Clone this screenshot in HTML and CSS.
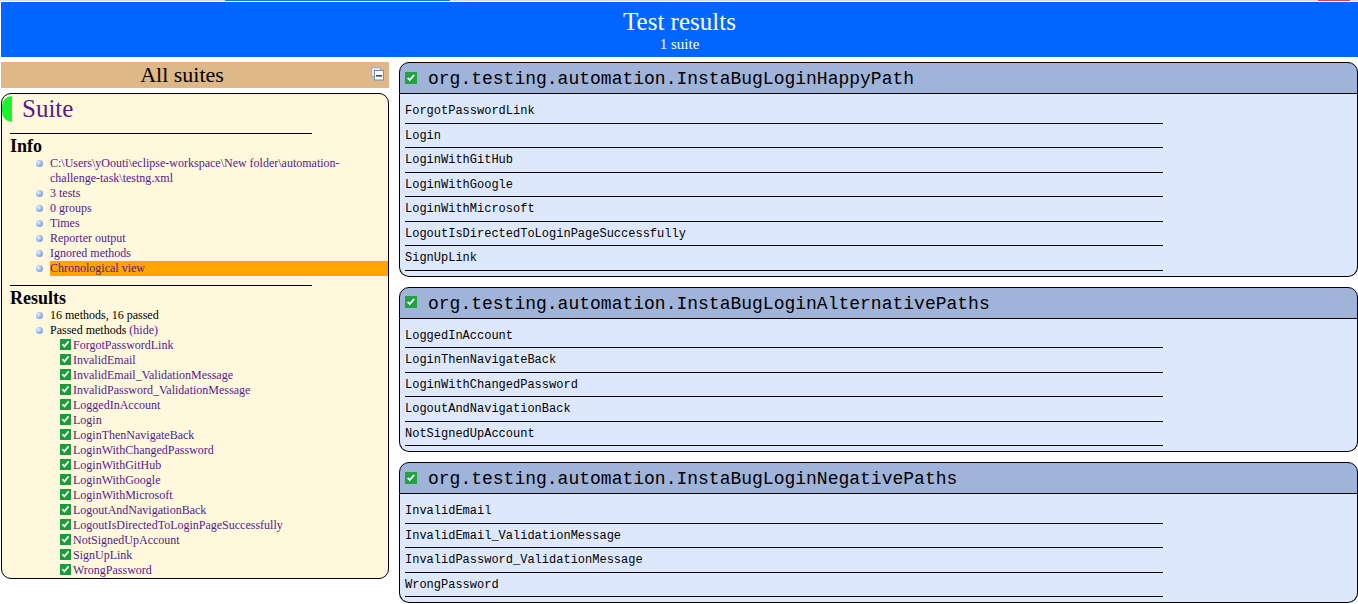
FILE: index.html
```html
<!DOCTYPE html>
<html>
<head>
<meta charset="utf-8">
<title>TestNG reports</title>
<link rel="stylesheet" href="styles.css">
</head>
<body>
<div class="topline">
  <span class="seg seg-grey seg-1"></span>
  <span class="seg seg-blue"></span>
  <span class="seg seg-grey seg-2"></span>
  <span class="seg seg-red"></span>
  <span class="seg seg-grey seg-3"></span>
</div>
<div class="page">
  <div class="banner">
    <span class="banner-title">Test results</span>
    <span class="banner-sub">1 suite</span>
  </div>
  <div class="main">
    <div class="nav">
      <div class="nav-header">
        <svg class="collapse-icon" viewBox="0 0 16 16" width="16" height="16">
          <rect x="3.5" y="0.5" width="9" height="9" fill="#dfe6f1" stroke="#9fb0c8"/>
          <rect x="6.5" y="3.5" width="9" height="9.5" fill="#ffffff" stroke="#6f8fb8"/>
          <rect x="8" y="8" width="6" height="1.6" fill="#1d4a9a"/>
        </svg>
        All suites
      </div>
      <div class="suite">
        <div class="suite-header"><span class="suite-name">Suite</span></div>
        <div class="suite-content">
          <div class="section-title">Info</div>
          <ul class="section-list">
            <li class="lnk">C:\Users\yOouti\eclipse-workspace\New folder\automation-challenge-task\testng.xml</li>
            <li class="lnk">3 tests</li>
            <li class="lnk">0 groups</li>
            <li class="lnk">Times</li>
            <li class="lnk">Reporter output</li>
            <li class="lnk">Ignored methods</li>
            <li class="lnk selected">Chronological view</li>
          </ul>
          <div class="section-title section-results">Results</div>
          <ul class="section-list">
            <li>16 methods, 16 passed</li>
            <li>Passed methods <span class="lnk">(hide)</span>
              <div class="method-list">
                <div class="method lnk"><svg class="chk" viewBox="0 0 11 11"><rect width="11" height="11" fill="#1c9b3b"/><path d="M2.4 5.2 L4.4 7.4 L8.6 2.4" stroke="#fff" stroke-width="1.7" fill="none"/></svg>ForgotPasswordLink</div>
                <div class="method lnk"><svg class="chk" viewBox="0 0 11 11"><rect width="11" height="11" fill="#1c9b3b"/><path d="M2.4 5.2 L4.4 7.4 L8.6 2.4" stroke="#fff" stroke-width="1.7" fill="none"/></svg>InvalidEmail</div>
                <div class="method lnk"><svg class="chk" viewBox="0 0 11 11"><rect width="11" height="11" fill="#1c9b3b"/><path d="M2.4 5.2 L4.4 7.4 L8.6 2.4" stroke="#fff" stroke-width="1.7" fill="none"/></svg>InvalidEmail_ValidationMessage</div>
                <div class="method lnk"><svg class="chk" viewBox="0 0 11 11"><rect width="11" height="11" fill="#1c9b3b"/><path d="M2.4 5.2 L4.4 7.4 L8.6 2.4" stroke="#fff" stroke-width="1.7" fill="none"/></svg>InvalidPassword_ValidationMessage</div>
                <div class="method lnk"><svg class="chk" viewBox="0 0 11 11"><rect width="11" height="11" fill="#1c9b3b"/><path d="M2.4 5.2 L4.4 7.4 L8.6 2.4" stroke="#fff" stroke-width="1.7" fill="none"/></svg>LoggedInAccount</div>
                <div class="method lnk"><svg class="chk" viewBox="0 0 11 11"><rect width="11" height="11" fill="#1c9b3b"/><path d="M2.4 5.2 L4.4 7.4 L8.6 2.4" stroke="#fff" stroke-width="1.7" fill="none"/></svg>Login</div>
                <div class="method lnk"><svg class="chk" viewBox="0 0 11 11"><rect width="11" height="11" fill="#1c9b3b"/><path d="M2.4 5.2 L4.4 7.4 L8.6 2.4" stroke="#fff" stroke-width="1.7" fill="none"/></svg>LoginThenNavigateBack</div>
                <div class="method lnk"><svg class="chk" viewBox="0 0 11 11"><rect width="11" height="11" fill="#1c9b3b"/><path d="M2.4 5.2 L4.4 7.4 L8.6 2.4" stroke="#fff" stroke-width="1.7" fill="none"/></svg>LoginWithChangedPassword</div>
                <div class="method lnk"><svg class="chk" viewBox="0 0 11 11"><rect width="11" height="11" fill="#1c9b3b"/><path d="M2.4 5.2 L4.4 7.4 L8.6 2.4" stroke="#fff" stroke-width="1.7" fill="none"/></svg>LoginWithGitHub</div>
                <div class="method lnk"><svg class="chk" viewBox="0 0 11 11"><rect width="11" height="11" fill="#1c9b3b"/><path d="M2.4 5.2 L4.4 7.4 L8.6 2.4" stroke="#fff" stroke-width="1.7" fill="none"/></svg>LoginWithGoogle</div>
                <div class="method lnk"><svg class="chk" viewBox="0 0 11 11"><rect width="11" height="11" fill="#1c9b3b"/><path d="M2.4 5.2 L4.4 7.4 L8.6 2.4" stroke="#fff" stroke-width="1.7" fill="none"/></svg>LoginWithMicrosoft</div>
                <div class="method lnk"><svg class="chk" viewBox="0 0 11 11"><rect width="11" height="11" fill="#1c9b3b"/><path d="M2.4 5.2 L4.4 7.4 L8.6 2.4" stroke="#fff" stroke-width="1.7" fill="none"/></svg>LogoutAndNavigationBack</div>
                <div class="method lnk"><svg class="chk" viewBox="0 0 11 11"><rect width="11" height="11" fill="#1c9b3b"/><path d="M2.4 5.2 L4.4 7.4 L8.6 2.4" stroke="#fff" stroke-width="1.7" fill="none"/></svg>LogoutIsDirectedToLoginPageSuccessfully</div>
                <div class="method lnk"><svg class="chk" viewBox="0 0 11 11"><rect width="11" height="11" fill="#1c9b3b"/><path d="M2.4 5.2 L4.4 7.4 L8.6 2.4" stroke="#fff" stroke-width="1.7" fill="none"/></svg>NotSignedUpAccount</div>
                <div class="method lnk"><svg class="chk" viewBox="0 0 11 11"><rect width="11" height="11" fill="#1c9b3b"/><path d="M2.4 5.2 L4.4 7.4 L8.6 2.4" stroke="#fff" stroke-width="1.7" fill="none"/></svg>SignUpLink</div>
                <div class="method lnk"><svg class="chk" viewBox="0 0 11 11"><rect width="11" height="11" fill="#1c9b3b"/><path d="M2.4 5.2 L4.4 7.4 L8.6 2.4" stroke="#fff" stroke-width="1.7" fill="none"/></svg>WrongPassword</div>
              </div>
            </li>
          </ul>
        </div>
      </div>
    </div>
    <div class="content">
      <div class="panel">
        <div class="panel-header"><svg class="hchk" viewBox="0 0 12 12"><rect width="12" height="12" fill="#1fa33f"/><path d="M2.6 5.8 L4.8 8 L9.2 2.8" stroke="#fff" stroke-width="1.8" fill="none"/></svg><span>org.testing.automation.InstaBugLoginHappyPath</span></div>
        <div class="panel-body">
          <div class="row">ForgotPasswordLink</div>
          <div class="row">Login</div>
          <div class="row">LoginWithGitHub</div>
          <div class="row">LoginWithGoogle</div>
          <div class="row">LoginWithMicrosoft</div>
          <div class="row">LogoutIsDirectedToLoginPageSuccessfully</div>
          <div class="row">SignUpLink</div>
        </div>
      </div>
      <div class="panel">
        <div class="panel-header"><svg class="hchk" viewBox="0 0 12 12"><rect width="12" height="12" fill="#1fa33f"/><path d="M2.6 5.8 L4.8 8 L9.2 2.8" stroke="#fff" stroke-width="1.8" fill="none"/></svg><span>org.testing.automation.InstaBugLoginAlternativePaths</span></div>
        <div class="panel-body">
          <div class="row">LoggedInAccount</div>
          <div class="row">LoginThenNavigateBack</div>
          <div class="row">LoginWithChangedPassword</div>
          <div class="row">LogoutAndNavigationBack</div>
          <div class="row">NotSignedUpAccount</div>
        </div>
      </div>
      <div class="panel">
        <div class="panel-header"><svg class="hchk" viewBox="0 0 12 12"><rect width="12" height="12" fill="#1fa33f"/><path d="M2.6 5.8 L4.8 8 L9.2 2.8" stroke="#fff" stroke-width="1.8" fill="none"/></svg><span>org.testing.automation.InstaBugLoginNegativePaths</span></div>
        <div class="panel-body">
          <div class="row">InvalidEmail</div>
          <div class="row">InvalidEmail_ValidationMessage</div>
          <div class="row">InvalidPassword_ValidationMessage</div>
          <div class="row">WrongPassword</div>
        </div>
      </div>
    </div>
  </div>
</div>
</body>
</html>
```

FILE: styles.css
```css
html, body {
  margin: 0;
  padding: 0;
}

body {
  background: #ffffff;
  overflow: hidden;
  width: 1358px;
  height: 604px;
  font-family: "Liberation Serif", "Times New Roman", serif;
  color: #000;
}

.topline {
  display: flex;
  height: 1px;
  margin-bottom: 1px;
}

.seg { display: block; height: 1px; }
.seg-grey { background: #dedede; }
.seg-1 { width: 225px; }
.seg-blue { width: 225px; background: #1a6ff0; }
.seg-2 { width: 868px; }
.seg-red { width: 32px; background: #d4453d; }
.seg-3 { flex: 1; }

.page {
  padding-left: 1px;
}

.banner {
  background: #0066ff;
  color: #ffffff;
  text-align: center;
  padding: 5px;
  height: 45px;
}

.banner-title {
  display: block;
  font-size: 25px;
  line-height: 30px;
}

.banner-sub {
  display: block;
  font-size: 15px;
  line-height: 15px;
}

.main {
  display: flex;
  margin-top: 5px;
}

.nav {
  width: 388px;
  flex: none;
  margin-right: 10px;
}

.nav-header {
  background: #deb887;
  font-size: 22px;
  line-height: 26px;
  height: 26px;
  text-align: center;
  margin-bottom: 5px;
}

.collapse-icon {
  float: right;
  padding: 5px;
  width: 16px;
  height: 16px;
}

.suite {
  border: 1px solid #000;
  border-radius: 10px;
  background: #fff8dc;
}

.suite-header {
  height: 27px;
  padding-top: 2px;
}

.suite-name {
  display: inline-block;
  height: 26px;
  line-height: 26px;
  font-size: 25px;
  color: #551a8b;
  border-left: 10px solid #19f52d;
  border-radius: 10px 0 0 10px;
  padding-left: 10px;
}

.suite-content {
  padding-left: 8px;
}

.section-title {
  margin-top: 10px;
  width: 80%;
  border-top: 1px solid #000;
  font-size: 18px;
  font-weight: bold;
  padding-top: 2px;
  line-height: 20px;
}

.section-results {
  margin-top: 9px;
}

.section-list {
  margin: 0;
  padding-left: 40px;
  list-style: none;
}

.section-list li {
  font-size: 12px;
  line-height: 15px;
}

.section-list li::before {
  content: "";
  display: inline-block;
  width: 7px;
  height: 7px;
  border-radius: 50%;
  background: radial-gradient(circle at 35% 35%, #eef3ff 0%, #9cbaf2 45%, #5a86de 100%);
  margin-left: -14px;
  margin-right: 7px;
  vertical-align: 0px;
}

.lnk {
  color: #551a8b;
}

.selected {
  background: #ffa500;
}

.method-list {
  margin-left: 10px;
}

.method {
  line-height: 15px;
  font-size: 12px;
  white-space: nowrap;
}

.chk {
  display: inline-block;
  width: 11px;
  height: 11px;
  margin-right: 2px;
  vertical-align: -1px;
}

.content {
  flex: 1;
  min-width: 0;
}

.panel {
  margin-bottom: 10px;
}

.panel-header {
  display: flex;
  align-items: center;
  background: #a0b4da;
  border: 1px solid #000;
  border-radius: 10px 10px 0 0;
  padding: 6px 5px 4px;
  font-family: "Liberation Mono", "Courier New", monospace;
  font-size: 18px;
  line-height: 20px;
  white-space: nowrap;
}

.hchk {
  width: 12px;
  height: 12px;
  flex: none;
  margin-right: 11px;
  margin-top: -3px;
}

.panel-body {
  background: #dee8fc;
  border: 1px solid #000;
  border-top: 0;
  border-radius: 0 0 10px 10px;
  padding: 5px;
}

.row {
  width: 80%;
  border-bottom: 1px solid #000;
  padding: 6px 0 4px;
  font-family: "Liberation Mono", "Courier New", monospace;
  font-size: 12px;
  line-height: 13.5px;
}
```
